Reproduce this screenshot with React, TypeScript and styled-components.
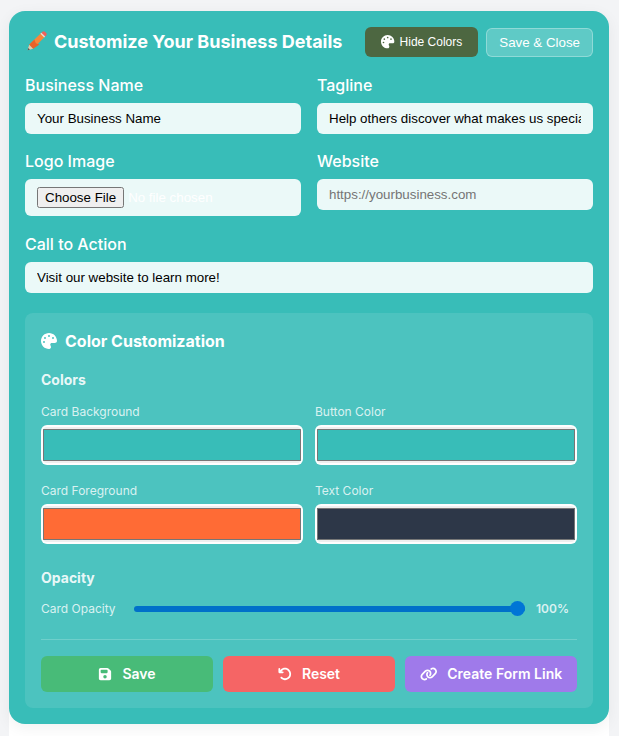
import React from "react";
import styled, { createGlobalStyle } from "styled-components";
import { FaArrowRotateLeft, FaFloppyDisk, FaLink, FaPalette } from "react-icons/fa6";

const GlobalStyle = createGlobalStyle`
  html, body {
    margin: 0;
    height: 100%;
    overflow: hidden;
    background: #f3f4f6;
  }
  * {
    box-sizing: border-box;
  }
  body {
    font-family: Inter, "Liberation Sans", sans-serif;
  }
`;

const Page = styled.div`
  width: 600px;
  height: 736px;
  margin-left: 9px;
  padding-top: 11px;
  background: linear-gradient(to bottom, transparent 700px, #ffffff 700px);
`;

const Card = styled.div`
  height: 713px;
  padding: 16px;
  border-radius: 16px;
  background: #38bdb8;
  color: #ffffff;
  box-shadow: 0 4px 16px rgba(0, 0, 0, 0.06);
`;

const Header = styled.header`
  display: flex;
  align-items: center;
  justify-content: space-between;
  height: 30px;
  margin-bottom: 18px;
`;

const Title = styled.h2`
  display: flex;
  align-items: center;
  gap: 7px;
  margin: 0 0 2px 2px;
  font-size: 18px;
  font-weight: 700;
`;

const HeaderActions = styled.div`
  display: flex;
  align-items: center;
  gap: 8px;
`;

const ToggleButton = styled.button`
  display: flex;
  align-items: center;
  gap: 5px;
  height: 30px;
  padding: 0 16px;
  border: 0;
  border-radius: 6px;
  background: #4d6741;
  color: #ffffff;
  font: 12px "Liberation Sans", sans-serif;
`;

const CloseButton = styled.button`
  height: 29px;
  padding: 0 12px;
  border: 1px solid rgba(255, 255, 255, 0.3);
  border-radius: 6px;
  background: rgba(255, 255, 255, 0.2);
  color: #ffffff;
  font: 13.333px "Liberation Sans", sans-serif;
`;

const FormGrid = styled.div`
  display: grid;
  grid-template-columns: 276px 276px;
  column-gap: 16px;
  align-items: start;
`;

const Field = styled.div<{ $wide?: boolean }>`
  grid-column: ${(p) => (p.$wide ? "1 / -1" : "auto")};
  margin-bottom: 17.4px;
`;

const Label = styled.label`
  display: block;
  margin-bottom: 8px;
  font-size: 16px;
  font-weight: 500;
  line-height: 20px;
`;

const TextInput = styled.input`
  display: block;
  width: 100%;
  height: 31px;
  padding: 8px 12px;
  border: 0;
  border-radius: 6px;
  background: rgba(255, 255, 255, 0.9);
  color: #000000;
  font: 13.333px "Liberation Sans", sans-serif;
  outline: none;

  &::placeholder {
    color: #757575;
  }
`;

const FileInput = styled(TextInput)`
  height: 37px;
  color: #ffffff;
`;

const ColorPanel = styled.section`
  height: 395px;
  margin-top: 2.8px;
  padding: 16px;
  border-radius: 8px;
  background: rgba(255, 255, 255, 0.1);
`;

const PanelTitle = styled.h3`
  display: flex;
  align-items: center;
  gap: 8px;
  height: 24px;
  margin: 0 0 18px;
  font-size: 16px;
  font-weight: 700;
`;

const GroupTitle = styled.h4<{ $gap: number }>`
  margin: 0 0 ${(p) => p.$gap}px;
  font-size: 14px;
  font-weight: 700;
  line-height: 18px;
  color: rgba(255, 255, 255, 0.9);
`;

const SwatchGrid = styled.div`
  display: grid;
  grid-template-columns: 262px 262px;
  column-gap: 12px;
  row-gap: 19px;
  margin-bottom: 25px;
`;

const SwatchLabel = styled.label`
  display: block;
  margin-bottom: 6px;
  font-size: 12px;
  line-height: 14px;
  color: rgba(255, 255, 255, 0.8);
`;

const ColorInput = styled.input`
  display: block;
  width: 100%;
  height: 40px;
  padding: 0;
  border: 2px solid rgba(255, 255, 255, 0.9);
  border-radius: 6px;
  background: #efefef;

  &::-webkit-color-swatch-wrapper {
    padding: 2px 0;
  }
  &::-webkit-color-swatch {
    border: 1px solid #767676;
    border-radius: 0;
  }
`;

const SliderRow = styled.div`
  display: flex;
  align-items: center;
  height: 20px;
`;

const SliderLabel = styled.span`
  width: 93px;
  font-size: 12px;
  color: rgba(255, 255, 255, 0.8);
`;

const Slider = styled.input`
  width: 391px;
  height: 15px;
  margin: 0;
  padding: 0;
  appearance: none;
  background: transparent;

  &::-webkit-slider-runnable-track {
    height: 6px;
    border-radius: 3px;
    background: #0070c9;
  }
  &::-webkit-slider-thumb {
    appearance: none;
    width: 15px;
    height: 15px;
    margin-top: -4.5px;
    border-radius: 50%;
    background: #0075d6;
  }
`;

const SliderValue = styled.span`
  margin-left: 11px;
  font-size: 12px;
  font-weight: 600;
  color: rgba(255, 255, 255, 0.8);
`;

const Divider = styled.hr`
  height: 1px;
  margin: 20px 0 16px;
  border: 0;
  background: rgba(255, 255, 255, 0.2);
`;

const ActionRow = styled.div`
  display: grid;
  grid-template-columns: repeat(3, 172px);
  column-gap: 10px;
`;

const ActionButton = styled.button<{ $bg: string }>`
  display: flex;
  align-items: center;
  justify-content: center;
  gap: 10px;
  height: 36px;
  padding: 0;
  border: 0;
  border-radius: 6px;
  background: ${(p) => p.$bg};
  color: #ffffff;
  font: 600 14px Inter, sans-serif;

  svg {
    width: 14px;
    height: 14px;
  }
`;

const WideLinkIcon = styled(FaLink)`
  && {
    width: 17.5px;
  }
`;

function PencilIcon() {
  return (
    <svg width="20" height="20" viewBox="1.5 1.2 17.5 17.5" aria-hidden="true">
      <path d="M3.4 13.2 13.6 3.2l3.3 3.3L6.8 16.7z" fill="#f7873a" />
      <path d="M3.4 13.2 8 8.7l1.2 3.3 3.2 1.1-5.6 3.6z" fill="#e8622a" />
      <path d="M13.6 3.2 15 1.8c.6-.6 1.5-.6 2.1 0l1.2 1.2c.6.6.6 1.5 0 2.1l-1.4 1.4z" fill="#f0605a" />
      <path d="m13.2 3.6.9-.9 3.3 3.3-.9.9z" fill="#e9dcd5" />
      <path d="M3.4 13.2 2 18.1l4.8-1.4z" fill="#e6c9a8" />
      <path d="M2.6 16 2 18.1l2.1-.6z" fill="#5a5a5a" />
    </svg>
  );
}

export default function App() {
  return (
    <Page>
      <GlobalStyle />
      <Card>
        <Header>
          <Title>
            <PencilIcon />
            Customize Your Business Details
          </Title>
          <HeaderActions>
            <ToggleButton>
              <FaPalette size={13.33} />
              Hide Colors
            </ToggleButton>
            <CloseButton>Save &amp; Close</CloseButton>
          </HeaderActions>
        </Header>
        <FormGrid>
          <Field>
            <Label>Business Name</Label>
            <TextInput defaultValue="Your Business Name" />
          </Field>
          <Field>
            <Label>Tagline</Label>
            <TextInput defaultValue="Help others discover what makes us special" />
          </Field>
          <Field>
            <Label>Logo Image</Label>
            <FileInput type="file" />
          </Field>
          <Field>
            <Label>Website</Label>
            <TextInput placeholder="https://yourbusiness.com" />
          </Field>
          <Field $wide>
            <Label>Call to Action</Label>
            <TextInput defaultValue="Visit our website to learn more!" />
          </Field>
        </FormGrid>
        <ColorPanel>
          <PanelTitle>
            <FaPalette size={16} />
            Color Customization
          </PanelTitle>
          <GroupTitle $gap={16}>Colors</GroupTitle>
          <SwatchGrid>
            <div>
              <SwatchLabel>Card Background</SwatchLabel>
              <ColorInput type="color" defaultValue="#38bdb8" />
            </div>
            <div>
              <SwatchLabel>Button Color</SwatchLabel>
              <ColorInput type="color" defaultValue="#38bdb8" />
            </div>
            <div>
              <SwatchLabel>Card Foreground</SwatchLabel>
              <ColorInput type="color" defaultValue="#ff6b35" />
            </div>
            <div>
              <SwatchLabel>Text Color</SwatchLabel>
              <ColorInput type="color" defaultValue="#2d3748" />
            </div>
          </SwatchGrid>
          <GroupTitle $gap={12}>Opacity</GroupTitle>
          <SliderRow>
            <SliderLabel>Card Opacity</SliderLabel>
            <Slider type="range" min={0} max={100} defaultValue={100} />
            <SliderValue>100%</SliderValue>
          </SliderRow>
          <Divider />
          <ActionRow>
            <ActionButton $bg="#48bb78">
              <FaFloppyDisk />
              Save
            </ActionButton>
            <ActionButton $bg="#f56565">
              <FaArrowRotateLeft />
              Reset
            </ActionButton>
            <ActionButton $bg="#9f7aea">
              <WideLinkIcon />
              Create Form Link
            </ActionButton>
          </ActionRow>
        </ColorPanel>
      </Card>
    </Page>
  );
}
